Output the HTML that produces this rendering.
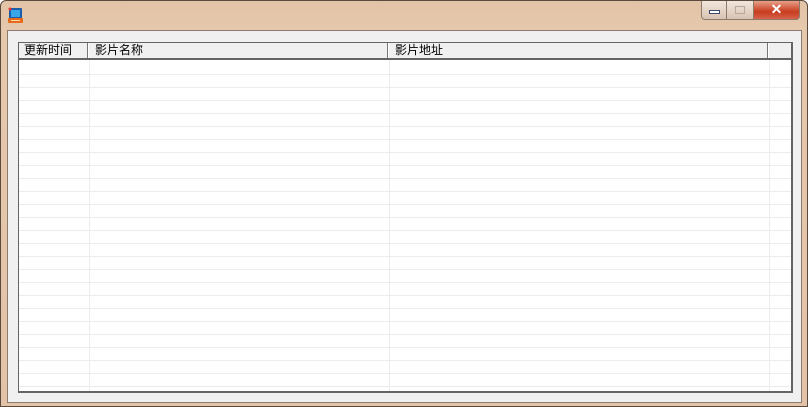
<!DOCTYPE html>
<html><head><meta charset="utf-8"><style>
*{margin:0;padding:0;box-sizing:border-box}
body{width:808px;height:407px;overflow:hidden;background:#fff;font-family:"Liberation Sans","Noto Sans CJK SC",sans-serif}
.win{position:absolute;left:0;top:0;width:808px;height:407px;border-radius:6px 6px 0 0;border:1px solid #5a4a3e;background:linear-gradient(#e2c3a7,#e6c8ad 30px,#e3c3a8);overflow:hidden}
.client{position:absolute;left:6px;top:29px;width:795px;height:373px;background:#f0f0f0;border:1px solid #8c7b6e}
.lv{position:absolute;left:10px;top:11px;width:775px;height:351px;background:#fff;border:1px solid #646464;border-width:1px 2px 2px 1px;overflow:hidden}
.rows{position:absolute;left:0;top:0;right:0;bottom:0;background:repeating-linear-gradient(#fff 0,#fff 12px,#ececec 12px,#ececec 13px);background-position:0 19px}
.vl{position:absolute;top:16px;bottom:0;width:1px;background:#ececec}
.hdr{position:absolute;left:0;top:0;right:0;height:17px;background:#f0f0f0;border-bottom:2px solid #646464;font-size:12px;line-height:15px;color:#000}
.hdr span{position:absolute;top:0}
.sep{position:absolute;top:0;height:15px;width:2px;background:#777;border-right:1px solid #fff}
.btn{position:absolute;top:0;height:19px;border:1px solid #8d7a6a;border-top:none}
</style></head><body>
<div class="win">
 <svg style="position:absolute;left:6px;top:6px" width="17" height="17" viewBox="0 0 17 17">
  <rect x="2" y="1" width="13" height="11" rx="1" fill="#1a5da8"/><rect x="4" y="3" width="9" height="7" fill="#39a6ea"/>
  <rect x="1" y="11" width="15" height="5" rx="1" fill="#e56a1b"/><rect x="4" y="13" width="9" height="1" fill="#ffd9a0"/>
  <circle cx="3" cy="2" r="1.5" fill="#e33"/>
 </svg>
 <div class="btn" style="left:700px;width:26px;border-radius:0 0 0 4px;background:linear-gradient(#f2e6dc,#d8c3b3)"><div style="position:absolute;left:7px;top:9px;width:11px;height:4px;border:1px solid #3b4a6a;background:#fff"></div></div>
 <div class="btn" style="left:726px;width:27px;background:linear-gradient(#f2e6dc,#d8c3b3);border-left:none"><div style="position:absolute;left:8px;top:5px;width:10px;height:8px;border:1px solid #b8a89a"></div></div>
 <div class="btn" style="left:753px;width:46px;border-radius:0 0 4px 0;background:linear-gradient(#e8a08a,#c73c1e 60%,#d8604a);border-left:none;color:#fff;font-weight:bold;font-size:14px;text-align:center;line-height:17px">✕</div>
 <div class="client">
  <div class="lv">
   <div class="rows"></div>
   <div class="vl" style="left:70px"></div>
   <div class="vl" style="left:370px"></div>
   <div class="vl" style="left:750px"></div>
   <div class="hdr">
    <span style="left:5px">更新时间</span>
    <div class="sep" style="left:68px"></div>
    <span style="left:76px">影片名称</span>
    <div class="sep" style="left:368px"></div>
    <span style="left:376px">影片地址</span>
    <div class="sep" style="left:748px"></div>
   </div>
  </div>
 </div>
</div>
</body></html>
